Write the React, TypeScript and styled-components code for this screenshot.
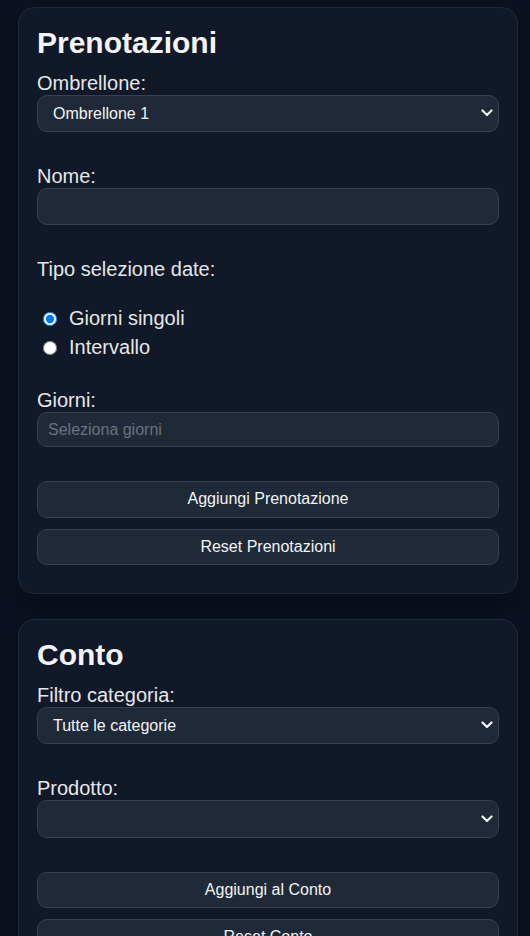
import React from 'react';
import styled, { createGlobalStyle } from 'styled-components';

const GlobalStyle = createGlobalStyle`
  html, body {
    margin: 0;
    background: #0c1221;
    color: #e5e7eb;
    font-family: "Liberation Sans", Arial, sans-serif;
  }
  body {
    padding: 7px 12px 0 18px;
  }
`;

const Card = styled.section`
  background: #111827;
  border: 1px solid #1f2937;
  border-radius: 16px;
  padding: 18px;
  margin-bottom: 25px;
  box-shadow: 0 10px 28px rgba(0, 0, 0, 0.35);
`;

const Title = styled.h2`
  margin: 0 0 11px;
  font-size: 30px;
  line-height: 34.5px;
  font-weight: 700;
  color: #f3f4f6;
`;

const Field = styled.div<{ $gap?: number }>`
  margin-bottom: ${(p) => p.$gap ?? 33}px;
`;

const Label = styled.label`
  display: block;
  font-size: 20px;
  line-height: 23px;
  color: #e5e7eb;
`;

const SelectWrap = styled.div`
  position: relative;
`;

const Select = styled.select`
  appearance: none;
  display: block;
  width: 100%;
  box-sizing: border-box;
  height: 37.5px;
  padding: 0 30px 0 15px;
  font-family: inherit;
  font-size: 16px;
  color: #f3f4f6;
  background: #1f2937;
  border: 1px solid #374151;
  border-radius: 10px;
  outline: none;
`;

const Chevron = styled.svg`
  position: absolute;
  right: 6px;
  top: 50%;
  margin-top: -4px;
  pointer-events: none;
`;

const Input = styled.input<{ $h?: number }>`
  display: block;
  width: 100%;
  box-sizing: border-box;
  height: ${(p) => p.$h ?? 37}px;
  padding: 0 10px;
  font-family: inherit;
  font-size: 16px;
  color: #f3f4f6;
  background: #1f2937;
  border: 1px solid #374151;
  border-radius: 10px;
  outline: none;

  &::placeholder {
    color: #6b7280;
  }
`;

const RadioGroup = styled.div`
  margin-top: 23px;
`;

const RadioRow = styled.label`
  display: flex;
  align-items: center;
  height: 29px;
  font-size: 20px;
  color: #e5e7eb;
`;

const Radio = styled.input`
  width: 14px;
  height: 14px;
  margin: 0 12px 0 6px;
`;

const Button = styled.button`
  display: block;
  width: 100%;
  height: 36.5px;
  margin-bottom: 11px;
  font-family: inherit;
  font-size: 16px;
  color: #f3f4f6;
  background: #1f2937;
  border: 1px solid #374151;
  border-radius: 10px;
  cursor: pointer;

  &:last-child {
    margin-bottom: 10px;
  }
`;

const Arrow = () => (
  <Chevron width="12" height="8" viewBox="0 0 12 8">
    <path d="M1.5 1.5 L6 6 L10.5 1.5" fill="none" stroke="#f3f4f6" strokeWidth="2.2" strokeLinecap="round" strokeLinejoin="round" />
  </Chevron>
);

const App: React.FC = () => {
  return (
    <>
      <GlobalStyle />
      <Card>
        <Title>Prenotazioni</Title>
        <Field>
          <Label>Ombrellone:</Label>
          <SelectWrap>
            <Select defaultValue="1">
              <option value="1">Ombrellone 1</option>
              <option value="2">Ombrellone 2</option>
            </Select>
            <Arrow />
          </SelectWrap>
        </Field>
        <Field>
          <Label>Nome:</Label>
          <Input type="text" />
        </Field>
        <Field $gap={27}>
          <Label>Tipo selezione date:</Label>
          <RadioGroup>
            <RadioRow>
              <Radio type="radio" name="mode" defaultChecked />
              Giorni singoli
            </RadioRow>
            <RadioRow>
              <Radio type="radio" name="mode" />
              Intervallo
            </RadioRow>
          </RadioGroup>
        </Field>
        <Field $gap={34}>
          <Label>Giorni:</Label>
          <Input type="text" placeholder="Seleziona giorni" $h={35} />
        </Field>
        <div>
          <Button>Aggiungi Prenotazione</Button>
          <Button>Reset Prenotazioni</Button>
        </div>
      </Card>

      <Card>
        <Title>Conto</Title>
        <Field>
          <Label>Filtro categoria:</Label>
          <SelectWrap>
            <Select defaultValue="all">
              <option value="all">Tutte le categorie</option>
            </Select>
            <Arrow />
          </SelectWrap>
        </Field>
        <Field $gap={34}>
          <Label>Prodotto:</Label>
          <SelectWrap>
            <Select defaultValue="">
              <option value=""></option>
            </Select>
            <Arrow />
          </SelectWrap>
        </Field>
        <div>
          <Button>Aggiungi al Conto</Button>
          <Button>Reset Conto</Button>
        </div>
      </Card>
    </>
  );
};

export default App;
